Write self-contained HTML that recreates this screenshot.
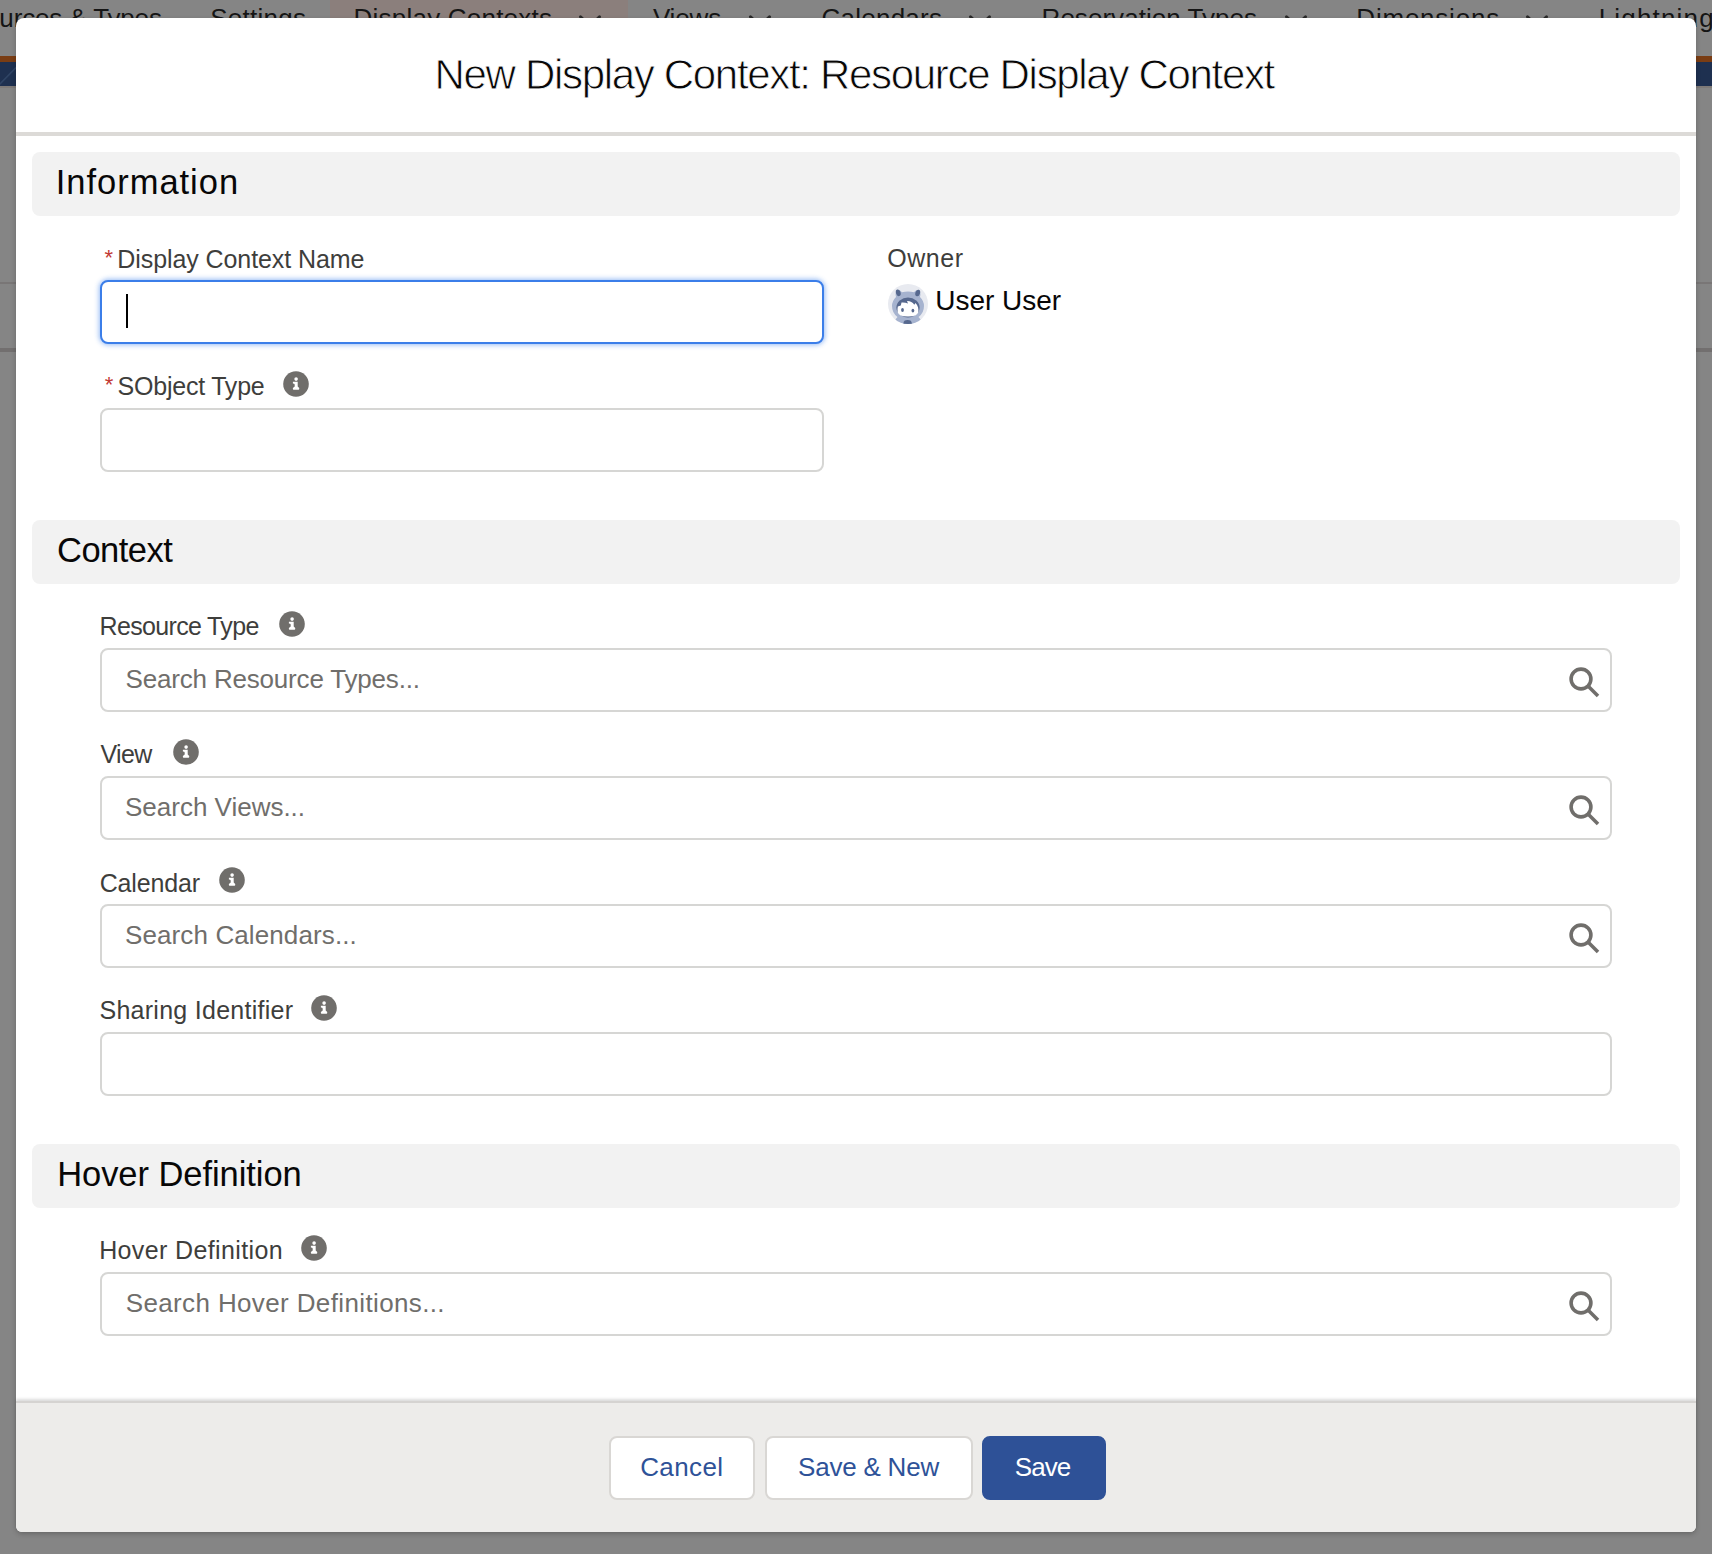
<!DOCTYPE html>
<html><head><meta charset="utf-8"><style>
*{margin:0;padding:0;box-sizing:border-box}
html,body{width:1712px;height:1554px;overflow:hidden;background:#858585;font-family:"Liberation Sans",sans-serif;position:relative}
.a{position:absolute}
.t{position:absolute;white-space:nowrap}
.modal{position:absolute;left:16px;top:18px;width:1680px;height:1514px;background:#fff;border-radius:8px 8px 6px 6px;box-shadow:0 2px 5px rgba(0,0,0,.22)}
.sec{position:absolute;left:32px;width:1648px;height:64px;background:#f2f2f2;border-radius:8px}
.inp{position:absolute;border:2px solid #d6d6d4;border-radius:8px;background:#fff}
.footer{position:absolute;left:16px;top:1401px;width:1680px;height:131px;background:#edecea;border-top:2px solid #d5d3d1;border-radius:0 0 6px 6px;box-shadow:0 -2px 3px rgba(0,0,0,.14)}
.btn{position:absolute;border:2px solid #d9d7d4;border-radius:8px;background:#fff}
.btn.brand{background:#2e5197;border-color:#2e5197}
</style></head><body>
<div class="a" style="left:330px;top:0;width:298px;height:18px;background:#8b7f7c"></div>
<div class="t" style="left:-0.66px;top:5.00px;font-size:26px;line-height:26px;letter-spacing:-0.139px;color:#151515;">urces &amp; Types</div>
<div class="t" style="left:210.20px;top:5.00px;font-size:26px;line-height:26px;letter-spacing:0.253px;color:#151515;">Settings</div>
<div class="t" style="left:353.57px;top:5.00px;font-size:26px;line-height:26px;letter-spacing:0.221px;color:#151515;">Display Contexts</div>
<div class="t" style="left:652.90px;top:5.00px;font-size:26px;line-height:26px;letter-spacing:-0.140px;color:#151515;">Views</div>
<div class="t" style="left:821.60px;top:5.00px;font-size:26px;line-height:26px;letter-spacing:0.229px;color:#151515;">Calendars</div>
<div class="t" style="left:1041.57px;top:5.00px;font-size:26px;line-height:26px;letter-spacing:0.038px;color:#151515;">Reservation Types</div>
<div class="t" style="left:1356.37px;top:5.00px;font-size:26px;line-height:26px;letter-spacing:0.772px;color:#151515;">Dimensions</div>
<div class="t" style="left:1598.67px;top:5.00px;font-size:26px;line-height:26px;letter-spacing:1.186px;color:#151515;">Lightning</div>
<svg class="a" style="left:576px;top:10px" width="28" height="20" viewBox="0 0 28 20"><path d="M4.5 6.8L14 16L23.5 6.8" fill="none" stroke="#2a2a2a" stroke-width="3" stroke-linecap="round" stroke-linejoin="round"/></svg>
<svg class="a" style="left:746px;top:10px" width="28" height="20" viewBox="0 0 28 20"><path d="M4.5 6.8L14 16L23.5 6.8" fill="none" stroke="#2a2a2a" stroke-width="3" stroke-linecap="round" stroke-linejoin="round"/></svg>
<svg class="a" style="left:966px;top:10px" width="28" height="20" viewBox="0 0 28 20"><path d="M4.5 6.8L14 16L23.5 6.8" fill="none" stroke="#2a2a2a" stroke-width="3" stroke-linecap="round" stroke-linejoin="round"/></svg>
<svg class="a" style="left:1282px;top:10px" width="28" height="20" viewBox="0 0 28 20"><path d="M4.5 6.8L14 16L23.5 6.8" fill="none" stroke="#2a2a2a" stroke-width="3" stroke-linecap="round" stroke-linejoin="round"/></svg>
<svg class="a" style="left:1523px;top:10px" width="28" height="20" viewBox="0 0 28 20"><path d="M4.5 6.8L14 16L23.5 6.8" fill="none" stroke="#2a2a2a" stroke-width="3" stroke-linecap="round" stroke-linejoin="round"/></svg>
<div class="a" style="left:0;top:56px;width:1712px;height:6px;background:#7a3d14"></div>
<div class="a" style="left:0;top:62px;width:1712px;height:24px;background:#1e3050"></div>
<div class="a" style="left:0;top:86px;width:1712px;height:2px;background:#7e7a78"></div>
<svg class="a" style="left:0;top:62px" width="16" height="24" viewBox="0 0 16 24"><path d="M-1 23L16 5.5" stroke="#34496a" stroke-width="1.6" opacity=".8"/></svg>
<div class="a" style="left:0;top:282px;width:1712px;height:2px;background:#797676"></div>
<div class="a" style="left:0;top:348px;width:1712px;height:4px;background:#726f6f"></div>
<div class="modal"></div>
<div class="t" style="left:434.56px;top:53.70px;font-size:42px;line-height:42px;letter-spacing:-1.317px;color:#080707;-webkit-text-stroke:0.8px #fff">New Display Context: Resource Display Context</div>
<div class="a" style="left:16px;top:132px;width:1680px;height:4px;background:#dcdad7"></div>
<div class="sec" style="top:152px"></div>
<div class="t" style="left:55.73px;top:165.00px;font-size:34.5px;line-height:34.5px;letter-spacing:0.981px;color:#080707;">Information</div>
<div class="sec" style="top:520px"></div>
<div class="t" style="left:57.07px;top:533.40px;font-size:34.5px;line-height:34.5px;letter-spacing:-0.531px;color:#080707;">Context</div>
<div class="sec" style="top:1144px"></div>
<div class="t" style="left:57.17px;top:1156.80px;font-size:34.5px;line-height:34.5px;letter-spacing:-0.053px;color:#080707;">Hover Definition</div>
<div class="t" style="left:104.55px;top:246.50px;font-size:22px;line-height:22px;letter-spacing:0.000px;color:#c23934;">*</div>
<div class="t" style="left:117.35px;top:246.50px;font-size:25px;line-height:25px;letter-spacing:-0.087px;color:#3e3e3c;">Display Context Name</div>
<div class="inp" style="left:100px;top:280px;width:724px;height:64px;border-color:#3b7ee9;box-shadow:0 0 5px 1px rgba(27,106,230,.45)"></div>
<div class="a" style="left:126px;top:294px;width:2px;height:34px;background:#000"></div>
<div class="t" style="left:887.20px;top:246.20px;font-size:25px;line-height:25px;letter-spacing:0.550px;color:#3e3e3c;">Owner</div>
<svg class="a" style="left:888px;top:284px" width="40" height="40" viewBox="0 0 40 40">
<defs><clipPath id="cc"><circle cx="20" cy="20" r="20"/></clipPath></defs>
<circle cx="20" cy="20" r="20" fill="#e8eaf0"/>
<g clip-path="url(#cc)">
<path d="M8.5 6.5Q11 5 14 8.2Q17 7.6 20 7.6Q23 7.6 26 8.2Q29 5 31.5 6.5Q33 9 32 13Q36 17 36 22Q36 29 30.5 33L33 36L34 41H6L7 36L9.5 33Q4 29 4 22Q4 17 8 13Q7 9 8.5 6.5Z" fill="#a6b3cf"/>
<ellipse cx="10.3" cy="8.8" rx="2.3" ry="3.4" fill="#56688e" transform="rotate(-18 10.3 8.8)"/>
<ellipse cx="29.7" cy="9" rx="2.3" ry="3.4" fill="#56688e" transform="rotate(18 29.7 9)"/>
<ellipse cx="20" cy="23.5" rx="11.6" ry="9.9" fill="#56688e"/>
<path d="M9.6 28Q9.4 24 9.8 22.5L12.8 21.5L13.5 18.5Q17 18.2 20 19.5L19 17Q23.5 16.8 26.3 20.7L27.5 19Q29.5 21 30.1 23.5Q30.6 26 30.3 28Q29.5 32.5 20 32.6Q10.5 32.5 9.6 28Z" fill="#fff"/>
<ellipse cx="14.5" cy="26" rx="1.4" ry="1.9" fill="#56688e"/>
<ellipse cx="24.9" cy="26.6" rx="1.4" ry="1.9" fill="#56688e"/>
<ellipse cx="19.6" cy="39.5" rx="4.2" ry="3.4" fill="#56688e"/>
</g></svg>
<div class="t" style="left:935.37px;top:286.90px;font-size:28px;line-height:28px;letter-spacing:-0.028px;color:#080707;">User User</div>
<div class="t" style="left:104.75px;top:374.00px;font-size:22px;line-height:22px;letter-spacing:0.000px;color:#c23934;">*</div>
<div class="t" style="left:117.55px;top:374.30px;font-size:25px;line-height:25px;letter-spacing:-0.223px;color:#3e3e3c;">SObject Type</div>
<svg class="a" style="left:283.0px;top:371.0px" width="26" height="26" viewBox="0 0 26 26"><circle cx="13" cy="13" r="12.8" fill="#706e6b"/><circle cx="13.1" cy="8.1" r="1.8" fill="#fff"/><path d="M9.9 10.8H14.7V15.6L16.2 17.1V18.1Q16.2 18.8 15.5 18.8H10.6Q9.9 18.8 9.9 18.1V17.1L11.7 15.6V13.4Q11.5 12.5 9.9 12.4Z" fill="#fff"/></svg>
<div class="inp" style="left:100px;top:408px;width:724px;height:64px;"></div>
<div class="t" style="left:99.55px;top:614.30px;font-size:25px;line-height:25px;letter-spacing:-0.662px;color:#3e3e3c;">Resource Type</div>
<svg class="a" style="left:279.0px;top:611.0px" width="26" height="26" viewBox="0 0 26 26"><circle cx="13" cy="13" r="12.8" fill="#706e6b"/><circle cx="13.1" cy="8.1" r="1.8" fill="#fff"/><path d="M9.9 10.8H14.7V15.6L16.2 17.1V18.1Q16.2 18.8 15.5 18.8H10.6Q9.9 18.8 9.9 18.1V17.1L11.7 15.6V13.4Q11.5 12.5 9.9 12.4Z" fill="#fff"/></svg>
<div class="inp" style="left:100px;top:648px;width:1512px;height:64px;"></div>
<div class="t" style="left:125.60px;top:666.00px;font-size:26px;line-height:26px;letter-spacing:-0.187px;color:#706e6b;">Search Resource Types...</div>
<svg class="a" style="left:1567px;top:665px" width="34" height="34" viewBox="0 0 34 34"><circle cx="14" cy="14" r="9.9" fill="none" stroke="#706e6b" stroke-width="3.6"/><path d="M21 21L31 31" stroke="#706e6b" stroke-width="3.6" stroke-linecap="butt"/></svg>
<div class="t" style="left:100.40px;top:742.40px;font-size:25px;line-height:25px;letter-spacing:-0.567px;color:#3e3e3c;">View</div>
<svg class="a" style="left:173.0px;top:739.0px" width="26" height="26" viewBox="0 0 26 26"><circle cx="13" cy="13" r="12.8" fill="#706e6b"/><circle cx="13.1" cy="8.1" r="1.8" fill="#fff"/><path d="M9.9 10.8H14.7V15.6L16.2 17.1V18.1Q16.2 18.8 15.5 18.8H10.6Q9.9 18.8 9.9 18.1V17.1L11.7 15.6V13.4Q11.5 12.5 9.9 12.4Z" fill="#fff"/></svg>
<div class="inp" style="left:100px;top:776px;width:1512px;height:64px;"></div>
<div class="t" style="left:125.00px;top:794.00px;font-size:26px;line-height:26px;letter-spacing:-0.007px;color:#706e6b;">Search Views...</div>
<svg class="a" style="left:1567px;top:793px" width="34" height="34" viewBox="0 0 34 34"><circle cx="14" cy="14" r="9.9" fill="none" stroke="#706e6b" stroke-width="3.6"/><path d="M21 21L31 31" stroke="#706e6b" stroke-width="3.6" stroke-linecap="butt"/></svg>
<div class="t" style="left:99.65px;top:870.60px;font-size:25px;line-height:25px;letter-spacing:-0.157px;color:#3e3e3c;">Calendar</div>
<svg class="a" style="left:219.0px;top:867.0px" width="26" height="26" viewBox="0 0 26 26"><circle cx="13" cy="13" r="12.8" fill="#706e6b"/><circle cx="13.1" cy="8.1" r="1.8" fill="#fff"/><path d="M9.9 10.8H14.7V15.6L16.2 17.1V18.1Q16.2 18.8 15.5 18.8H10.6Q9.9 18.8 9.9 18.1V17.1L11.7 15.6V13.4Q11.5 12.5 9.9 12.4Z" fill="#fff"/></svg>
<div class="inp" style="left:100px;top:904px;width:1512px;height:64px;"></div>
<div class="t" style="left:125.00px;top:922.00px;font-size:26px;line-height:26px;letter-spacing:0.111px;color:#706e6b;">Search Calendars...</div>
<svg class="a" style="left:1567px;top:921px" width="34" height="34" viewBox="0 0 34 34"><circle cx="14" cy="14" r="9.9" fill="none" stroke="#706e6b" stroke-width="3.6"/><path d="M21 21L31 31" stroke="#706e6b" stroke-width="3.6" stroke-linecap="butt"/></svg>
<div class="t" style="left:99.45px;top:998.20px;font-size:25px;line-height:25px;letter-spacing:0.274px;color:#3e3e3c;">Sharing Identifier</div>
<svg class="a" style="left:311.0px;top:995.0px" width="26" height="26" viewBox="0 0 26 26"><circle cx="13" cy="13" r="12.8" fill="#706e6b"/><circle cx="13.1" cy="8.1" r="1.8" fill="#fff"/><path d="M9.9 10.8H14.7V15.6L16.2 17.1V18.1Q16.2 18.8 15.5 18.8H10.6Q9.9 18.8 9.9 18.1V17.1L11.7 15.6V13.4Q11.5 12.5 9.9 12.4Z" fill="#fff"/></svg>
<div class="inp" style="left:100px;top:1032px;width:1512px;height:64px;"></div>
<div class="t" style="left:99.15px;top:1238.20px;font-size:25px;line-height:25px;letter-spacing:0.380px;color:#3e3e3c;">Hover Definition</div>
<svg class="a" style="left:301.0px;top:1235.0px" width="26" height="26" viewBox="0 0 26 26"><circle cx="13" cy="13" r="12.8" fill="#706e6b"/><circle cx="13.1" cy="8.1" r="1.8" fill="#fff"/><path d="M9.9 10.8H14.7V15.6L16.2 17.1V18.1Q16.2 18.8 15.5 18.8H10.6Q9.9 18.8 9.9 18.1V17.1L11.7 15.6V13.4Q11.5 12.5 9.9 12.4Z" fill="#fff"/></svg>
<div class="inp" style="left:100px;top:1272px;width:1512px;height:64px;"></div>
<div class="t" style="left:125.70px;top:1290.00px;font-size:26px;line-height:26px;letter-spacing:0.371px;color:#706e6b;">Search Hover Definitions...</div>
<svg class="a" style="left:1567px;top:1289px" width="34" height="34" viewBox="0 0 34 34"><circle cx="14" cy="14" r="9.9" fill="none" stroke="#706e6b" stroke-width="3.6"/><path d="M21 21L31 31" stroke="#706e6b" stroke-width="3.6" stroke-linecap="butt"/></svg>
<div class="footer"></div>
<div class="btn" style="left:609px;width:146px;top:1436px;height:64px"></div>
<div class="btn" style="left:765px;width:208px;top:1436px;height:64px"></div>
<div class="btn brand" style="left:982px;width:124px;top:1436px;height:64px"></div>
<div class="t" style="left:640.20px;top:1453.50px;font-size:26px;line-height:26px;letter-spacing:0.381px;color:#2e5298;">Cancel</div>
<div class="t" style="left:798.00px;top:1453.50px;font-size:26px;line-height:26px;letter-spacing:-0.212px;color:#2e5298;">Save &amp; New</div>
<div class="t" style="left:1014.80px;top:1453.50px;font-size:26px;line-height:26px;letter-spacing:-0.980px;color:#fff;">Save</div>
</body></html>
